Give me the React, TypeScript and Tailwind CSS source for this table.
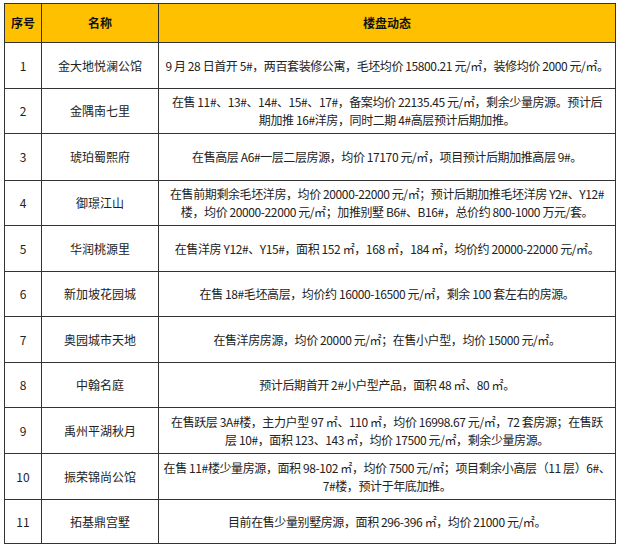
const rows: { no: string; name: string; lines: string[] }[] = [
  { no: "1", name: "金大地悦澜公馆", lines: ["9 月 28 日首开 5#，两百套装修公寓，毛坯均价 15800.21 元/㎡，装修均价 2000 元/㎡。"] },
  {
    no: "2",
    name: "金隅南七里",
    lines: ["在售 11#、13#、14#、15#、17#，备案均价 22135.45 元/㎡，剩余少量房源。预计后", "期加推 16#洋房，同时二期 4#高层预计后期加推。"],
  },
  { no: "3", name: "琥珀蜀熙府", lines: ["在售高层 A6#一层二层房源，均价 17170 元/㎡，项目预计后期加推高层 9#。"] },
  {
    no: "4",
    name: "御璟江山",
    lines: ["在售前期剩余毛坯洋房，均价 20000-22000 元/㎡；预计后期加推毛坯洋房 Y2#、Y12#", "楼，均价 20000-22000 元/㎡；加推别墅 B6#、B16#，总价约 800-1000 万元/套。"],
  },
  { no: "5", name: "华润桃源里", lines: ["在售洋房 Y12#、Y15#，面积 152 ㎡，168 ㎡，184 ㎡，均价约 20000-22000 元/㎡。"] },
  { no: "6", name: "新加坡花园城", lines: ["在售 18#毛坯高层，均价约 16000-16500 元/㎡，剩余 100 套左右的房源。"] },
  { no: "7", name: "奥园城市天地", lines: ["在售洋房房源，均价 20000 元/㎡；在售小户型，均价 15000 元/㎡。"] },
  { no: "8", name: "中翰名庭", lines: ["预计后期首开 2#小户型产品，面积 48 ㎡、80 ㎡。"] },
  {
    no: "9",
    name: "禹州平湖秋月",
    lines: ["在售跃层 3A#楼，主力户型 97 ㎡、110 ㎡，均价 16998.67 元/㎡，72 套房源；在售跃", "层 10#，面积 123、143 ㎡，均价 17500 元/㎡，剩余少量房源。"],
  },
  {
    no: "10",
    name: "振荣锦尚公馆",
    lines: ["在售 11#楼少量房源，面积 98-102 ㎡，均价 7500 元/㎡；项目剩余小高层（11 层）6#、", "7#楼，预计于年底加推。"],
  },
  { no: "11", name: "拓基鼎宫墅", lines: ["目前在售少量别墅房源，面积 296-396 ㎡，均价 21000 元/㎡。"] },
];

const heights = ["h-[46px]", "h-[45px]", "h-[47px]", "h-[45px]", "h-[46px]", "h-[45px]", "h-[46px]", "h-[45px]", "h-[46px]", "h-[46px]", "h-[44px]"];

export default function App() {
  return (
    <div className="w-[620px] h-[549px] bg-white pt-[3px] pl-[4px] font-['Noto_Sans_CJK_SC',sans-serif] text-[12px] text-[#222]">
      <table className="w-[612px] border-collapse table-fixed">
        <colgroup>
          <col className="w-[37px]" />
          <col className="w-[117px]" />
          <col />
        </colgroup>
        <thead>
          <tr className="h-[39px] bg-[#ffc000] font-bold text-[#111]">
            <th className="border border-[#333] text-center">序号</th>
            <th className="border border-[#333] text-center">名称</th>
            <th className="border border-[#333] text-center">楼盘动态</th>
          </tr>
        </thead>
        <tbody>
          {rows.map((r, i) => (
            <tr key={r.no} className={heights[i]}>
              <td className="border border-[#333] text-center">{r.no}</td>
              <td className="border border-[#333] text-center">{r.name}</td>
              <td className="border border-[#333] text-center text-[12px] tracking-[-0.4px] leading-[18px] p-0 whitespace-nowrap">
                {r.lines.map((l, j) => (
                  <div key={j}>{l}</div>
                ))}
              </td>
            </tr>
          ))}
        </tbody>
      </table>
    </div>
  );
}
